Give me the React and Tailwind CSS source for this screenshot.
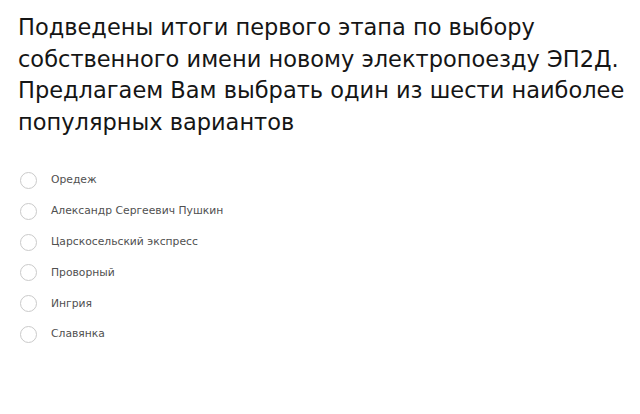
import React from 'react';

const options = [
  'Оредеж',
  'Александр Сергеевич Пушкин',
  'Царскосельский экспресс',
  'Проворный',
  'Ингрия',
  'Славянка',
];

const titleLines = [
  'Подведены итоги первого этапа по выбору',
  'собственного имени новому электропоезду ЭП2Д.',
  'Предлагаем Вам выбрать один из шести наиболее',
  'популярных вариантов',
];

const App = () => {
  return (
    <main className="w-[640px] h-[414px] bg-white overflow-hidden">
      <h1 className="pl-[18px] pt-[12px] text-[22.5px] leading-[31.5px] text-[#151515] font-['DejaVu_Sans',sans-serif] font-normal whitespace-nowrap">
        {titleLines.map((line) => (
          <span key={line} className="block">{line}</span>
        ))}
      </h1>

      <ul className="mt-[34px] pl-[20px] flex flex-col gap-[13.8px]">
        {options.map((name) => (
          <li key={name} className="flex items-center gap-[14px] h-[17px]">
            <span className="w-[17px] h-[17px] rounded-full border-[1.5px] border-[#cacaca] bg-white shrink-0" />
            <span className="text-[10.75px] text-[#505050] font-['DejaVu_Sans',sans-serif]">
              {name}
            </span>
          </li>
        ))}
      </ul>
    </main>
  );
};

export default App;
